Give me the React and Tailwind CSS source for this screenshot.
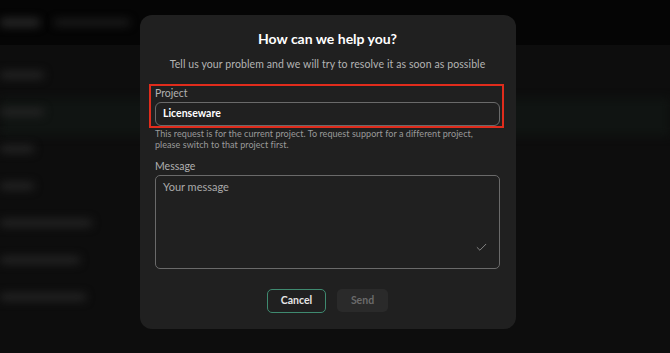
import { Check } from "lucide-react";

const sideItems = ["w-[44px]", "w-[44px]", "w-[34px]", "w-[34px]", "w-[92px]", "w-[80px]", "w-[86px]"];

const Backdrop = () => {
  return (
    <div className="absolute inset-0 bg-[#0d0d0d] overflow-hidden">
      <div className="h-[45px] bg-[#050505] flex items-center gap-[14px]">
        <div className="h-[9px] w-[40px] bg-[#262626] blur-[4px] rounded" />
        <div className="h-[7px] w-[76px] bg-[#1c1c1c] blur-[4px] rounded" />
      </div>
      <div className="absolute left-0 right-0 top-[98px] h-[38px] bg-[#101412] blur-[4px]" />
      <div className="relative flex flex-col pt-[26px] gap-[29px]">
        {sideItems.map((w, i) => (
          <div key={i} className={`h-[8px] ${w} bg-[#232323] blur-[4px] rounded`} />
        ))}
      </div>
    </div>
  );
};

export default function App() {
  return (
    <div
      className="relative w-[670px] h-[353px] overflow-hidden"
      style={{ fontFamily: "Lato, 'Noto Sans', sans-serif" }}
    >
      <Backdrop />
      <div className="absolute left-[140px] top-[15px] w-[376px] h-[314px] bg-[#202020] rounded-[12px] pl-[15px] pr-[16px] pt-[14px]">
        <h2 className="text-center text-[14px] leading-[20px] font-bold text-white">How can we help you?</h2>
        <p className="text-center text-[10.5px] leading-[14px] text-[#b4b4b4] mt-[8px] tracking-[0.1px]">
          Tell us your problem and we will try to resolve it as soon as possible
        </p>

        <div className="mt-[13px] ml-[-6px] mr-[-4px] border-2 border-[#e02c1c] pl-[4px] pr-[2px]">
          <div className="text-[10.5px] text-[#b0b0b0] leading-[14px]">Project</div>
          <div className="mt-[2px] h-[24px] border border-[#6a6a6a] rounded-[6px] flex items-center px-[7px] text-[10.5px] font-bold text-white">
            Licenseware
          </div>
        </div>
        <p className="text-[9px] text-[#9a9a9a] leading-[11px] tracking-[0.05px]">
          This request is for the current project. To request support for a different project,
          <br />
          please switch to that project first.
        </p>

        <div className="mt-[9px] text-[10.5px] text-[#b0b0b0] leading-[14px]">Message</div>
        <div className="relative mt-[2px] h-[94px] border border-[#6a6a6a] rounded-[5px] px-[7px] pt-[4px]">
          <div className="text-[11px] leading-[14px] text-[#aaaaaa]">Your message</div>
          <Check className="absolute right-[11px] bottom-[14px] text-[#9a9a9a]" size={13} strokeWidth={1.5} />
        </div>

        <div className="flex justify-center gap-[11px] mt-[20px]">
          <button className="w-[59px] h-[24px] border border-[#3f8a70] rounded-[5px] text-[10.5px] font-bold text-[#e6e6e6]">
            Cancel
          </button>
          <button className="w-[51px] h-[23px] bg-[#2a2a2a] rounded-[5px] text-[10.5px] font-bold text-[#6a6a6a]">
            Send
          </button>
        </div>
      </div>
    </div>
  );
}
